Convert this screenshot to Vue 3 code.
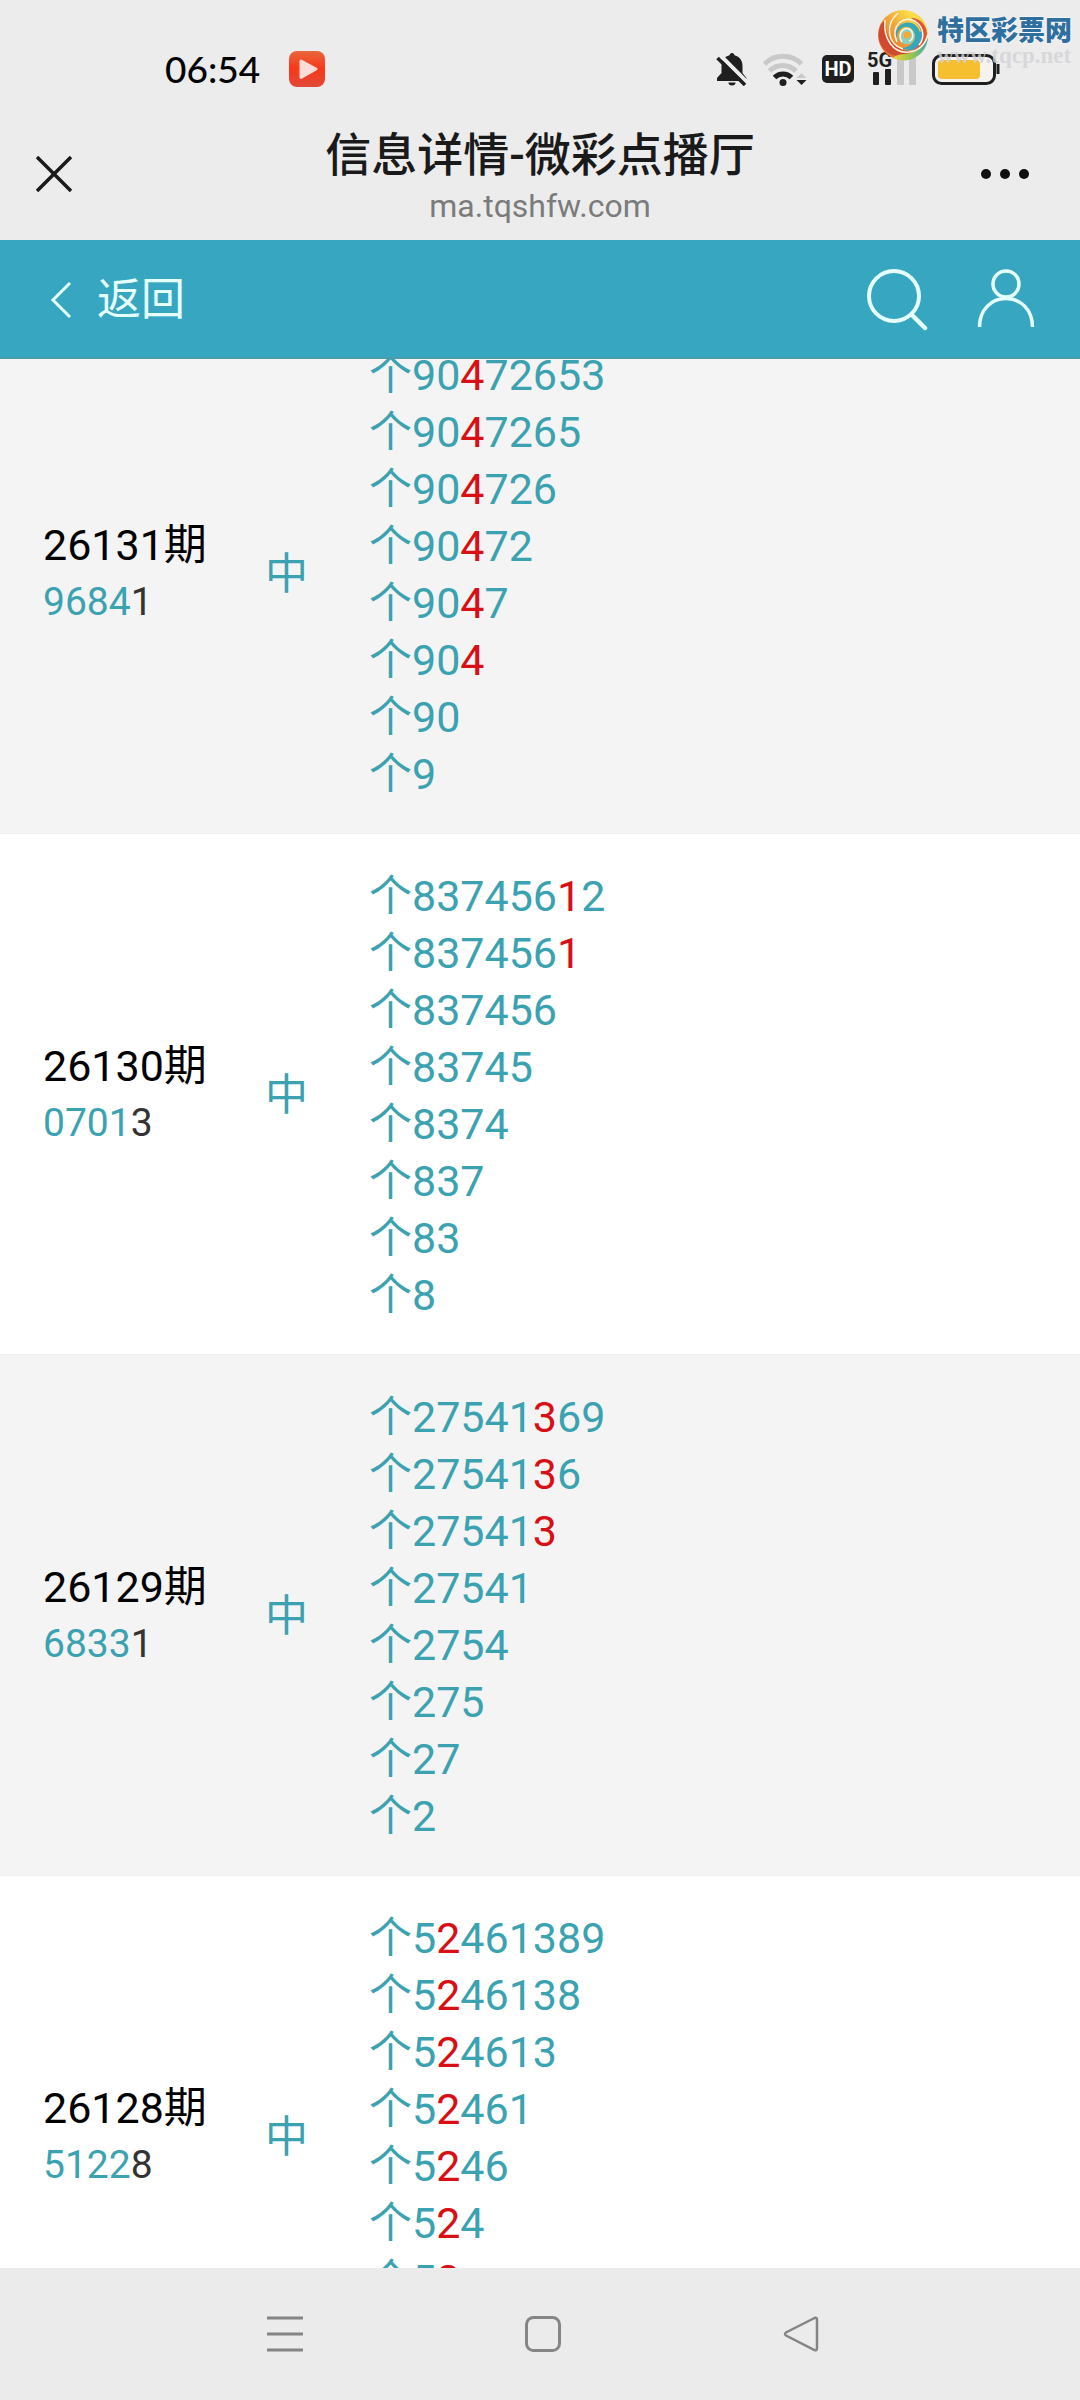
<script setup>
import { onMounted, ref } from 'vue'

const records = [
  { issue: '26131', open: '9684', last: '1', digits: '90472653', hit: 2 },
  { issue: '26130', open: '0701', last: '3', digits: '83745612', hit: 6 },
  { issue: '26129', open: '6833', last: '1', digits: '27541369', hit: 5 },
  { issue: '26128', open: '5122', last: '8', digits: '52461389', hit: 1 },
]

// Each record lists its digits from all eight down to a single one.
const linesOf = (r) =>
  Array.from({ length: 8 }, (_, i) => {
    const s = r.digits.slice(0, 8 - i)
    return { head: s.slice(0, r.hit), hit: s.slice(r.hit, r.hit + 1), tail: s.slice(r.hit + 1) }
  })

const list = ref(null)
onMounted(() => {
  list.value.scrollTop = 46
})
</script>

<template>
  <div class="phone">
    <header class="top">
      <div class="status">
        <div class="status-left">
          <span class="time">06:54</span>
          <svg class="play" viewBox="0 0 36 36" width="36" height="36">
            <defs>
              <linearGradient id="playbg" x1="0" y1="0" x2="0" y2="1">
                <stop offset="0" stop-color="#e8683c" />
                <stop offset="0.5" stop-color="#f8371a" />
                <stop offset="1" stop-color="#e04a38" />
              </linearGradient>
            </defs>
            <rect width="36" height="36" rx="8" fill="url(#playbg)" />
            <path d="M12 10 L27 18 L12 26.500 Z" fill="#ffdcd8" stroke="#ffdcd8" stroke-width="3" stroke-linejoin="round" />
          </svg>
        </div>
        <div class="status-right">
          <svg viewBox="0 0 32 34" width="32" height="34">
            <path d="M16 1c1.500 0 2.300 1 2.500 2.300C24 4.600 26.500 9 26.500 14v7l4 5v3H1v-3l4.500-5v-7c0-5 2.500-9.400 8-10.700C13.700 2 14.500 1 16 1z" fill="#1f1f1f" />
            <path d="M12.500 30.500h7a3.500 3 0 0 1-7 0z" fill="#1f1f1f" />
            <path d="M4 3 L32 31" stroke="#ececec" stroke-width="4" />
            <path d="M1.500 6 L29 33" stroke="#1f1f1f" stroke-width="3.500" />
          </svg>
          <svg viewBox="0 0 44 34" width="44" height="34">
            <g fill="none" stroke-width="5">
              <path d="M1.500 12 a26 26 0 0 1 37 0" stroke="#c9c9c9" />
              <path d="M6.500 19 a18.500 18.500 0 0 1 26.500 0" stroke="#c9c9c9" />
              <path d="M11.500 25.500 a12 12 0 0 1 17 0" stroke="#1f1f1f" />
            </g>
            <circle cx="20" cy="30.500" r="3.500" fill="#1f1f1f" />
            <path d="M33.500 26 l5-5 5 5z" fill="#c9c9c9" />
            <path d="M33.500 28 l5 5 5-5z" fill="#1f1f1f" />
          </svg>
          <span class="hd">HD</span>
          <div class="signal">
            <svg viewBox="0 0 48 34" width="48" height="34">
              <rect x="4" y="20" width="6" height="13" rx="1" fill="#1f1f1f" />
              <rect x="16" y="17" width="6" height="16" rx="1" fill="#1f1f1f" />
              <rect x="28" y="8" width="7" height="25" rx="1" fill="#c9c9c9" />
              <rect x="40" y="4" width="7" height="29" rx="1" fill="#c9c9c9" />
            </svg>
            <span>5G</span>
          </div>
          <svg viewBox="0 0 68 34" width="68" height="34">
            <rect x="1.500" y="3.500" width="61" height="28" rx="8" fill="#f6f3ee" stroke="#1f1f1f" stroke-width="3" />
            <rect x="6" y="8" width="42" height="19" rx="4" fill="#f6bf2f" />
            <path d="M66 12v10" stroke="#1f1f1f" stroke-width="3" />
          </svg>
        </div>
      </div>

      <div class="titlebar">
        <button class="icon-btn close" aria-label="关闭">
          <svg viewBox="0 0 36 36" width="36" height="36">
            <path d="M1 1 L35 35 M35 1 L1 35" stroke="#1a1a1a" stroke-width="3.500" />
          </svg>
        </button>
        <div class="titles">
          <h1>信息详情-微彩点播厅</h1>
          <p>ma.tqshfw.com</p>
        </div>
        <button class="icon-btn more" aria-label="更多">
          <svg viewBox="0 0 50 36" width="50" height="36">
            <circle cx="6" cy="18" r="5" fill="#111" />
            <circle cx="25" cy="18" r="5" fill="#111" />
            <circle cx="44" cy="18" r="5" fill="#111" />
          </svg>
        </button>
      </div>

      <div class="mark">
        <svg viewBox="0 0 52 54" width="52" height="54">
          <defs>
            <linearGradient id="sun" x1="0" y1="1" x2="1" y2="0">
              <stop offset="0" stop-color="#e25a2e" />
              <stop offset="0.5" stop-color="#f3a23a" />
              <stop offset="0.8" stop-color="#fbe04a" />
              <stop offset="1" stop-color="#f3a03a" />
            </linearGradient>
            <linearGradient id="leaf" x1="0" y1="0" x2="1" y2="0">
              <stop offset="0" stop-color="#f3d23e" />
              <stop offset="0.5" stop-color="#9cc74a" />
              <stop offset="1" stop-color="#3fa8b8" />
            </linearGradient>
          </defs>
          <circle cx="26" cy="27" r="25" fill="url(#sun)" />
          <path d="M4 16 C-3 32 6 46 20 48 C28 49 34 46 38 43 C22 45 8 34 8 12z" fill="#cf4a30" />
          <path d="M16 50 C32 58 52 46 51 26 C49 38 40 45 28 46 C23 46 19 47 16 50z" fill="url(#leaf)" />
          <path d="M34 10 C44 10 50 18 50 26 C49 36 42 42 34 43 C42 37 46 30 44 23 C42 17 38 13 34 10z" fill="#e0553a" />
          <path d="M46 22 C48 34 40 43 28 43 C38 39 42 32 41 25z" fill="#3f9fc8" />
          <path d="M20 34 C15 22 24 12 35 15 C43 18 46 28 40 36 C36 41 28 43 24 40 C32 40 38 34 38 28 C37 20 30 17 25 20 C20 23 19 29 20 34z" fill="#36a9b8" />
          <path d="M23 33 C20 26 24 20 31 20 C36 21 39 26 37 31 C35 37 27 38 23 33z" fill="#8fd0c4" />
          <g fill="none" stroke="#fff6df" stroke-width="1.500">
            <path d="M8 12 C6 30 16 46 32 44 C42 43 49 36 51 26" />
            <path d="M21 5 C8 16 10 36 26 41" />
            <path d="M20 34 C13 18 26 7 38 13 C47 19 48 30 42 37" />
            <path d="M25 34 C20 26 26 19 32 21 C37 24 37 31 32 33" />
          </g>
          <circle cx="30" cy="27" r="3.500" fill="#f6a92e" />
        </svg>
        <div class="mark-text">
          <strong>特区彩票网</strong>
          <span>www.tqcp.net</span>
        </div>
      </div>
    </header>

    <nav class="bar">
      <a href="#" class="back">
        <svg viewBox="0 0 22 38" width="22" height="38">
          <path d="M20 2 L3 19 L20 36" fill="none" stroke="#e6ffff" stroke-width="3" />
        </svg>
        <span>返回</span>
      </a>
      <div class="tools">
        <button class="icon-btn" aria-label="搜索">
          <svg viewBox="0 0 62 64" width="62" height="64">
            <g fill="none" stroke="#e6ffff" stroke-linecap="round">
              <circle cx="28" cy="28" r="25" stroke-width="4" />
              <path d="M46 47 L59 60" stroke-width="4.500" />
            </g>
          </svg>
        </button>
        <button class="icon-btn" aria-label="我的">
          <svg viewBox="0 0 58 64" width="58" height="64">
            <g fill="none" stroke="#e6ffff" stroke-width="3.500">
              <circle cx="29" cy="16" r="13" />
              <path d="M2.500 59 C2.500 42 14 30.500 29 30.500 S55.500 42 55.500 59" />
            </g>
          </svg>
        </button>
      </div>
    </nav>

    <main ref="list" class="list">
      <section v-for="r in records" :key="r.issue" class="row">
        <div class="issue">
          <div class="no">{{ r.issue }}期</div>
          <div class="open">{{ r.open }}<span>{{ r.last }}</span></div>
        </div>
        <div class="state">中</div>
        <ul>
          <li v-for="(l, i) in linesOf(r)" :key="i">个{{ l.head }}<b>{{ l.hit }}</b>{{ l.tail }}</li>
        </ul>
      </section>
    </main>

    <footer class="keys">
      <button class="icon-btn" aria-label="菜单">
        <svg viewBox="0 0 36 38" width="36" height="38">
          <path d="M0 3h36M0 19h36M0 35h36" stroke="#858585" stroke-width="3" />
        </svg>
      </button>
      <button class="icon-btn" aria-label="主页">
        <svg viewBox="0 0 36 38" width="36" height="38">
          <rect x="1.500" y="2.500" width="33" height="33" rx="7" fill="none" stroke="#858585" stroke-width="3" />
        </svg>
      </button>
      <button class="icon-btn" aria-label="返回键">
        <svg viewBox="0 0 36 38" width="36" height="38">
          <path d="M31.500 3 L3 17.500 Q1 19 3 20.500 L31.500 35 Q34 36 34 33 V5 Q34 2 31.500 3z" fill="none" stroke="#858585" stroke-width="2.500" />
        </svg>
      </button>
    </footer>
  </div>
</template>

<style>
body {
  margin: 0;
}
</style>

<style scoped>
.phone {
  display: flex;
  flex-direction: column;
  height: 100vh;
  background: #fff;
  font-family: Roboto, "Noto Sans CJK SC", sans-serif;
  color: #000;
}
.icon-btn {
  display: flex;
  align-items: center;
  justify-content: center;
  padding: 0;
  border: 0;
  background: none;
}
svg {
  display: block;
  flex: none;
}
.top {
  position: relative;
  flex: none;
  background: #ececec;
}
.status {
  display: flex;
  justify-content: space-between;
  align-items: center;
  height: 108px;
  padding: 30px 80px 0 165px;
  box-sizing: border-box;
}
.status-left,
.status-right {
  display: flex;
  align-items: center;
}
.status-left {
  gap: 29px;
}
.time {
  font: 500 37px/40px Lato, sans-serif;
}
.status-right {
  gap: 15px;
}
.hd {
  width: 32px;
  height: 28px;
  border-radius: 5px;
  background: #1f1f1f;
  color: #fff;
  font-size: 20px;
  font-weight: 700;
  line-height: 28px;
  text-align: center;
}
.signal {
  position: relative;
}
.signal span {
  position: absolute;
  left: -2px;
  top: -2px;
  color: #1f1f1f;
  font-size: 20px;
  font-weight: 700;
  line-height: 20px;
}
.titlebar {
  display: grid;
  grid-template-columns: 1fr auto 1fr;
  align-items: center;
  height: 132px;
  padding: 0 36px;
}
.close {
  justify-self: start;
}
.more {
  justify-self: end;
  padding-right: 14px;
}
.titles {
  align-self: start;
  padding-top: 15px;
  text-align: center;
}
h1 {
  margin: 0;
  font-size: 46px;
  font-weight: 500;
  line-height: 64px;
  color: #1a1a1a;
}
p {
  margin: 0;
  font-size: 32px;
  line-height: 38px;
  color: #7b7b7b;
}
.mark {
  position: absolute;
  top: 8px;
  right: 8px;
  display: flex;
  gap: 8px;
}
.mark-text {
  display: flex;
  flex-direction: column;
  padding-top: 8px;
}
.mark-text strong {
  font-size: 27px;
  font-weight: 900;
  line-height: 30px;
  color: #2f6f9f;
  text-shadow: 0 0 2px #fff, 0 0 2px #fff;
}
.mark-text span {
  font: 700 23px/20px "Liberation Serif", serif;
  color: rgba(210, 210, 214, 0.8);
}
.bar {
  display: flex;
  flex: none;
  align-items: center;
  justify-content: space-between;
  height: 119px;
  padding: 3px 45px 0 50px;
  box-sizing: border-box;
  border-bottom: 2px solid #4a9dab;
  background: #36a6c1;
}
.back {
  display: flex;
  align-items: center;
  gap: 25px;
  font-size: 44px;
  line-height: 57px;
  color: #e6ffff;
  text-decoration: none;
}
.tools {
  display: flex;
  gap: 49px;
}
.list {
  flex: 1;
  min-height: 0;
  overflow: hidden;
}
.row {
  display: grid;
  grid-template-columns: 222px 104px 1fr;
  align-items: center;
  padding: 32px 43px 30px;
  border-bottom: 1px solid #f0f0f0;
  font-size: 43px;
  line-height: 57px;
}
.row:nth-child(odd) {
  background: #f4f4f4;
}
.open {
  font-size: 39px;
  color: #3aa2b0;
}
.open span {
  color: #333;
}
.state,
ul {
  color: #3aa2b0;
}
ul {
  margin: 0;
  padding: 2px 0 0;
  list-style: none;
}
b {
  font-weight: 400;
  color: #d80f14;
}
.keys {
  display: grid;
  flex: none;
  grid-template-columns: repeat(3, 1fr);
  align-items: center;
  height: 132px;
  padding: 0 150px 0 156px;
  background: #ebebeb;
}
</style>
